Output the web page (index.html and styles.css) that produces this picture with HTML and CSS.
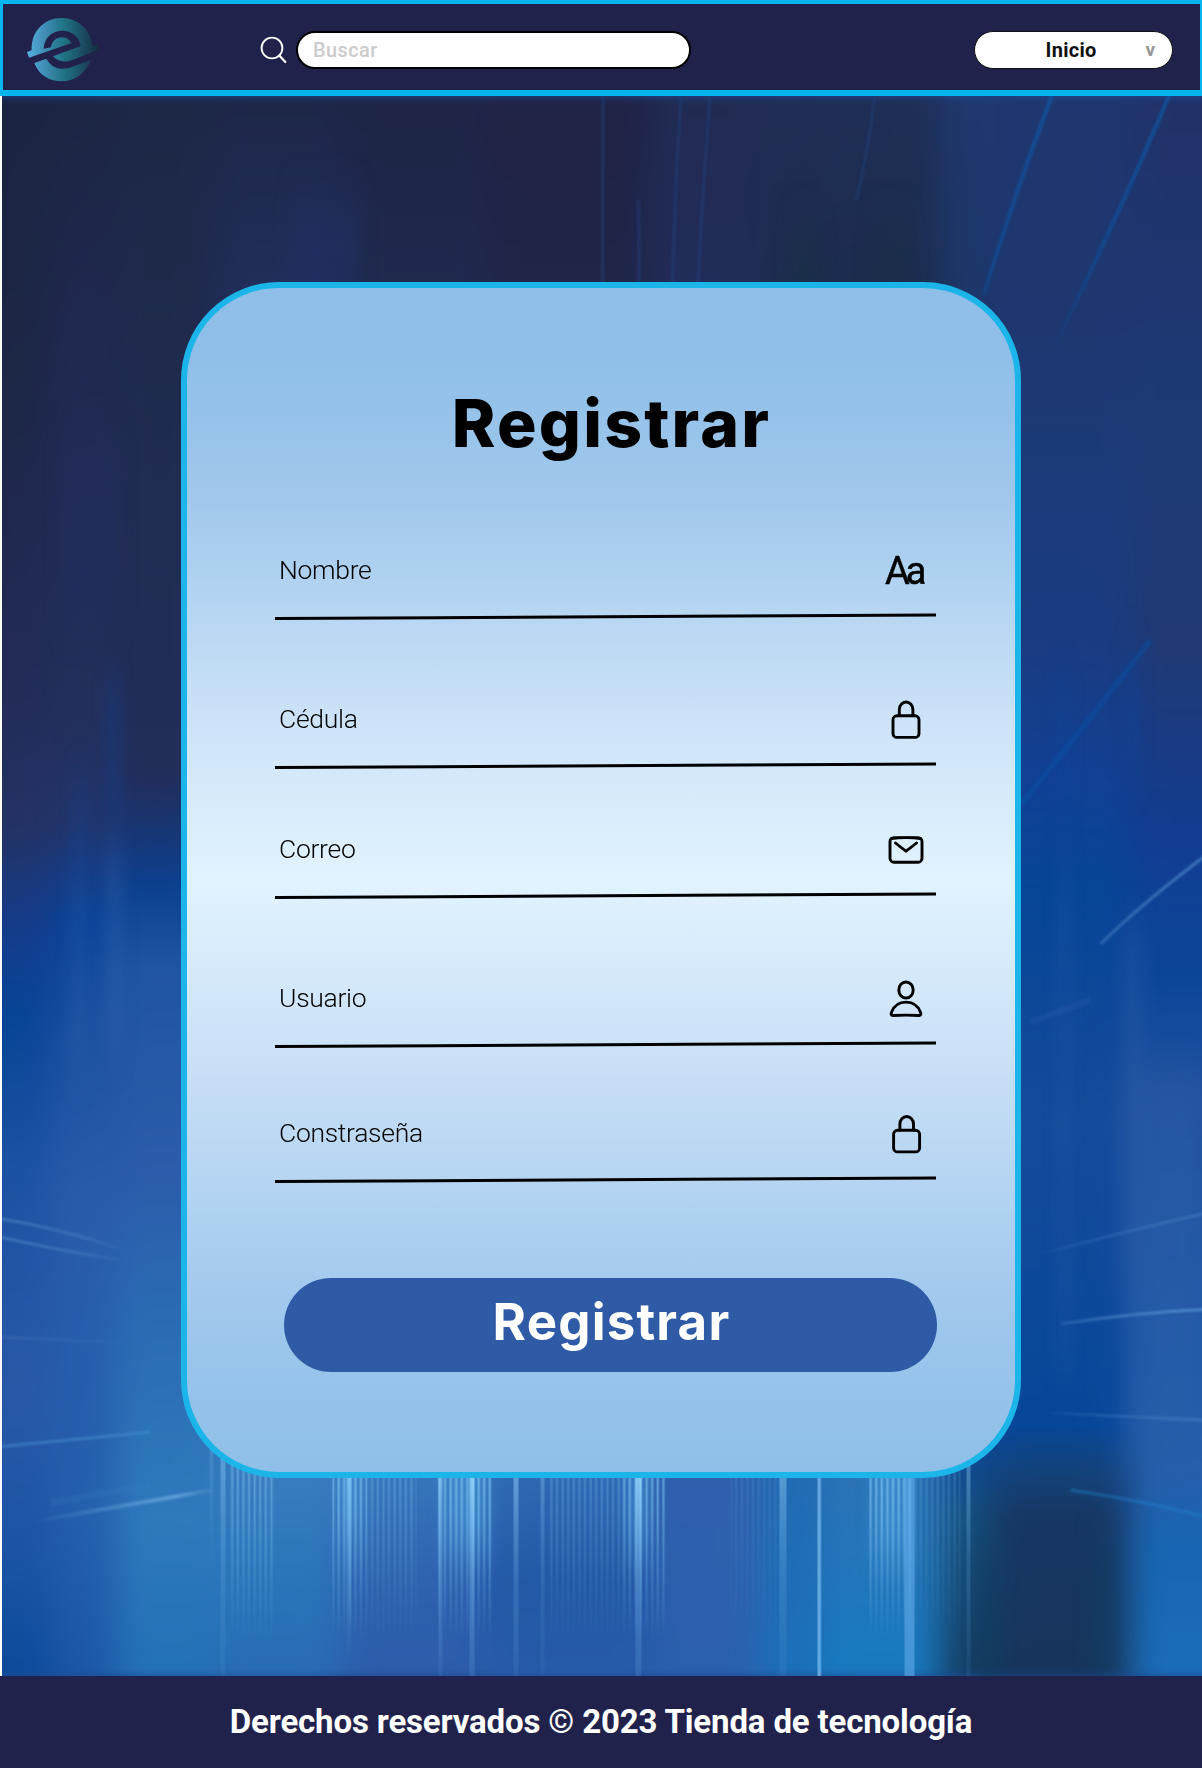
FILE: index.html
```html
<!DOCTYPE html>
<html lang="es">
<head>
<meta charset="utf-8">
<title>Registrar</title>
<link rel="stylesheet" href="styles.css">
</head>
<body>
<header class="topbar">
  <svg class="logo" width="76" height="68" viewBox="0 0 228 204">
    <defs><linearGradient id="lg" gradientUnits="userSpaceOnUse" x1="6" y1="0" x2="220" y2="0"><stop offset="0" stop-color="#58b0e2"/><stop offset=".25" stop-color="#3f8db5"/><stop offset=".5" stop-color="#217587"/><stop offset=".8" stop-color="#1b4a60"/><stop offset="1" stop-color="#142c40"/></linearGradient></defs>
    <path fill="url(#lg)" fill-rule="evenodd" d="M6 108L20 103C18 45 58 6 110 6C162 6 198 44 202 88L218 86L220 101L144 131C120 140 98 138 84 121L167 90C164 62 140 44 112 44C82 44 58 64 56 98L78 94C80 76 94 64 111 64C124 64 134 70 140 81L12 125ZM28 141L64 128C78 152 100 164 132 156L198 132C184 170 150 196 110 196C70 196 40 174 28 141Z"/>
  </svg>
  <div class="search">
    <svg class="search-icon" width="28" height="28" viewBox="0 0 28 28" fill="none" stroke="#fff" stroke-linecap="round"><circle cx="12" cy="12" r="10.4" stroke-width="1.9"/><path d="M19.3 19.5L25.3 26" stroke-width="2.2"/></svg>
    <div class="search-field">Buscar</div>
  </div>
  <div class="select"><span>Inicio</span><span class="caret">v</span></div>
</header>
<main class="stage">
  <svg class="backdrop" width="1200.5" height="1580" viewBox="1.5 96 1200.5 1580" preserveAspectRatio="none">
    <defs>
      <linearGradient id="c0" x2="0" y2="1"><stop offset="0" stop-color="#1b2440"/><stop offset=".2" stop-color="#1d2747"/><stop offset=".38" stop-color="#232b59"/><stop offset=".46" stop-color="#243263"/><stop offset=".53" stop-color="#143c8c"/><stop offset=".58" stop-color="#074495"/><stop offset=".68" stop-color="#1c52a2"/><stop offset=".82" stop-color="#2a58a8"/><stop offset=".92" stop-color="#1b54a4"/><stop offset="1" stop-color="#0c4a9a"/></linearGradient>
      <linearGradient id="c1" x2="0" y2="1"><stop offset="0" stop-color="#1c2542"/><stop offset=".2" stop-color="#212a52"/><stop offset=".4" stop-color="#22305c"/><stop offset=".46" stop-color="#22356c"/><stop offset=".52" stop-color="#0a4297"/><stop offset=".59" stop-color="#1c50a0"/><stop offset=".7" stop-color="#2b5cab"/><stop offset=".8" stop-color="#265eac"/><stop offset=".9" stop-color="#235fac"/><stop offset="1" stop-color="#1b56a5"/></linearGradient>
      <linearGradient id="c2" x2="0" y2="1"><stop offset="0" stop-color="#1d2746"/><stop offset=".25" stop-color="#202c50"/><stop offset=".43" stop-color="#222d5a"/><stop offset=".5" stop-color="#0c408f"/><stop offset=".55" stop-color="#2055a3"/><stop offset=".68" stop-color="#2c5cab"/><stop offset=".78" stop-color="#2a6db5"/><stop offset=".9" stop-color="#2f79bd"/><stop offset="1" stop-color="#2371b7"/></linearGradient>
      <linearGradient id="c3" x2="0" y2="1"><stop offset="0" stop-color="#1e2747"/><stop offset=".12" stop-color="#222e5b"/><stop offset=".5" stop-color="#1a4a99"/><stop offset=".87" stop-color="#397dc0"/><stop offset=".95" stop-color="#2873b9"/><stop offset="1" stop-color="#2a6cb6"/></linearGradient>
      <linearGradient id="c4" x2="0" y2="1"><stop offset="0" stop-color="#1e2546"/><stop offset=".12" stop-color="#1f294d"/><stop offset=".5" stop-color="#1a4a99"/><stop offset=".87" stop-color="#3676bd"/><stop offset=".95" stop-color="#2e60ae"/><stop offset="1" stop-color="#2d5cab"/></linearGradient>
      <linearGradient id="c5" x2="0" y2="1"><stop offset="0" stop-color="#1f2345"/><stop offset=".12" stop-color="#1f2648"/><stop offset=".5" stop-color="#1a4a99"/><stop offset=".87" stop-color="#2f6ab5"/><stop offset=".94" stop-color="#2359a6"/><stop offset="1" stop-color="#275baa"/></linearGradient>
      <linearGradient id="c6" x2="0" y2="1"><stop offset="0" stop-color="#212b52"/><stop offset=".12" stop-color="#212b59"/><stop offset=".5" stop-color="#1a4a99"/><stop offset=".87" stop-color="#305fae"/><stop offset="1" stop-color="#2b60ae"/></linearGradient>
      <linearGradient id="c7" x2="0" y2="1"><stop offset="0" stop-color="#222c54"/><stop offset=".12" stop-color="#1c2d4d"/><stop offset=".5" stop-color="#1a4a99"/><stop offset=".87" stop-color="#216bb3"/><stop offset="1" stop-color="#1b70b8"/></linearGradient>
      <linearGradient id="c8" x2="0" y2="1"><stop offset="0" stop-color="#1f2e55"/><stop offset=".12" stop-color="#1c2c4d"/><stop offset=".5" stop-color="#1a4a99"/><stop offset=".87" stop-color="#2d72b7"/><stop offset="1" stop-color="#177ac0"/></linearGradient>
      <linearGradient id="c9" x2="0" y2="1"><stop offset="0" stop-color="#1f396f"/><stop offset=".13" stop-color="#1c3869"/><stop offset=".5" stop-color="#0c4597"/><stop offset=".85" stop-color="#0b4799"/><stop offset=".9" stop-color="#14517f"/><stop offset="1" stop-color="#143c60"/></linearGradient>
      <linearGradient id="c10" x2="0" y2="1"><stop offset="0" stop-color="#1f376f"/><stop offset=".12" stop-color="#1f376f"/><stop offset=".35" stop-color="#193c82"/><stop offset=".43" stop-color="#124094"/><stop offset=".5" stop-color="#064596"/><stop offset=".65" stop-color="#154b9b"/><stop offset=".84" stop-color="#064799"/><stop offset=".87" stop-color="#13427b"/><stop offset=".9" stop-color="#173763"/><stop offset="1" stop-color="#17345b"/></linearGradient>
      <linearGradient id="c11" x2="0" y2="1"><stop offset="0" stop-color="#213268"/><stop offset=".2" stop-color="#1d3a76"/><stop offset=".35" stop-color="#203974"/><stop offset=".47" stop-color="#123d92"/><stop offset=".56" stop-color="#0b4698"/><stop offset=".63" stop-color="#2352a1"/><stop offset=".8" stop-color="#235ba9"/><stop offset=".87" stop-color="#275fad"/><stop offset=".92" stop-color="#1866b3"/><stop offset="1" stop-color="#1b6dba"/></linearGradient>
      <filter id="soft" x="-10%" width="120%" y="-2%" height="104%" color-interpolation-filters="sRGB"><feGaussianBlur stdDeviation="18 5"/></filter>
      <filter id="haze" x="-50%" width="200%" y="-50%" height="200%" color-interpolation-filters="sRGB"><feGaussianBlur stdDeviation="8 22"/></filter>
      <filter id="thin" filterUnits="userSpaceOnUse" x="0" y="60" width="1230" height="1640" color-interpolation-filters="sRGB"><feGaussianBlur stdDeviation="1.2"/></filter>
      <linearGradient id="rayIn" gradientUnits="userSpaceOnUse" x1="1030" y1="0" x2="1180" y2="0"><stop offset="0" stop-color="#5c94d4" stop-opacity="0"/><stop offset=".5" stop-color="#4d84c8"/><stop offset="1" stop-color="#5f9cda"/></linearGradient>
      <linearGradient id="rayOut" gradientUnits="userSpaceOnUse" x1="0" y1="0" x2="135" y2="0"><stop offset="0" stop-color="#5990d0"/><stop offset=".6" stop-color="#4a80c4"/><stop offset="1" stop-color="#4a80c4" stop-opacity="0"/></linearGradient>
      <linearGradient id="rayLow" gradientUnits="userSpaceOnUse" x1="30" y1="0" x2="212" y2="0"><stop offset="0" stop-color="#6aa8de" stop-opacity="0"/><stop offset=".8" stop-color="#70acdf"/><stop offset="1" stop-color="#6aa8de" stop-opacity=".2"/></linearGradient>
      <linearGradient id="down" gradientUnits="userSpaceOnUse" x1="0" y1="96" x2="0" y2="360"><stop offset="0" stop-color="#1255a0"/><stop offset=".6" stop-color="#104a93"/><stop offset="1" stop-color="#104a93" stop-opacity="0"/></linearGradient>
      <linearGradient id="fade" x2="0" y2="1"><stop offset="0" stop-color="#84cdf8" stop-opacity=".75"/><stop offset=".4" stop-color="#76bdf0" stop-opacity=".4"/><stop offset="1" stop-color="#6eaee8" stop-opacity="0"/></linearGradient>
      <linearGradient id="long" x2="0" y2="1"><stop offset="0" stop-color="#9ddcff" stop-opacity=".8"/><stop offset=".5" stop-color="#7bbcf0" stop-opacity=".4"/><stop offset="1" stop-color="#6aa6e4" stop-opacity=".2"/></linearGradient>
      <linearGradient id="combfade" x2="0" y2="1"><stop offset="0" stop-color="#ddd"/><stop offset=".35" stop-color="#999"/><stop offset=".85" stop-color="#000"/></linearGradient>
      <mask id="combmask" maskUnits="userSpaceOnUse" x="200" y="1430" width="760" height="246"><rect x="200" y="1430" width="760" height="246" fill="url(#combfade)"/></mask>
      <pattern id="comb" patternUnits="userSpaceOnUse" width="5.6" height="20"><rect x="1" width="2.2" height="20" fill="#7cc3f2"/></pattern>
      <filter id="edge" filterUnits="userSpaceOnUse" x="190" y="1400" width="800" height="320" color-interpolation-filters="sRGB"><feGaussianBlur stdDeviation=".7 0"/></filter>
    </defs>
    <rect x="0" y="90" width="1204" height="1590" fill="#1d4a95"/>
    <g filter="url(#soft)">
      <rect x="-60" y="96" width="110" height="1580" fill="url(#c0)"/>
      <rect x="50" y="96" width="65" height="1580" fill="url(#c1)"/>
      <rect x="115" y="96" width="105" height="1580" fill="url(#c2)"/>
      <rect x="220" y="96" width="120" height="1580" fill="url(#c3)"/>
      <rect x="340" y="96" width="140" height="1580" fill="url(#c4)"/>
      <rect x="480" y="96" width="170" height="1580" fill="url(#c5)"/>
      <rect x="650" y="96" width="110" height="1580" fill="url(#c6)"/>
      <rect x="760" y="96" width="60" height="1580" fill="url(#c7)"/>
      <rect x="820" y="96" width="120" height="1580" fill="url(#c8)"/>
      <rect x="940" y="96" width="50" height="1580" fill="url(#c9)"/>
      <rect x="990" y="96" width="138" height="1580" fill="url(#c10)"/>
      <rect x="1128" y="96" width="140" height="1580" fill="url(#c11)"/>
    </g>
    <g filter="url(#haze)">
      <rect x="72" y="870" width="12" height="200" fill="#3467b0" opacity=".3"/>
      <rect x="106" y="850" width="14" height="200" fill="#3b6cb5" opacity=".35"/>
      <rect x="109" y="680" width="7" height="140" fill="#0b4ba4" opacity=".6"/>
      <rect x="76" y="780" width="8" height="90" fill="#0b4ba4" opacity=".4"/>
      <rect x="1058" y="680" width="8" height="130" fill="#0c4aa4" opacity=".5"/>
      <rect x="1128" y="650" width="8" height="130" fill="#0c4aa4" opacity=".5"/>
      <rect x="1122" y="930" width="20" height="360" fill="#2858a4" opacity=".5"/>
      <rect x="1060" y="860" width="8" height="520" fill="#2458a6" opacity=".45"/>
      <rect x="1126" y="1080" width="70" height="380" fill="#2a5faa" opacity=".35"/>
      <rect x="980" y="1560" width="20" height="140" fill="#103e5f" opacity=".6"/>
      <rect x="1090" y="1540" width="25" height="140" fill="#103e60" opacity=".6"/>
      <rect x="790" y="230" width="30" height="80" fill="#1a2f46" opacity=".5"/>
      <rect x="870" y="230" width="40" height="60" fill="#1a3048" opacity=".5"/>
      <rect x="290" y="200" width="70" height="100" fill="#222e62" opacity=".6"/>
      <rect x="60" y="440" width="60" height="180" fill="#232c60" opacity=".5"/>
    </g>
    <g filter="url(#thin)" fill="none" stroke-width="3">
      <path d="M1053 92Q1015 190 983 296M1170 92Q1125 200 1055 345" stroke="url(#down)" stroke-width="4" opacity=".85"/>
      <path d="M875 90Q868 150 856 200M710 90Q702 190 697 290M681 90Q674 190 672 290M602.5 90L602 290M638 200L638.5 290" stroke="#21427c" stroke-width="2.5" opacity=".65"/>
      <path d="M1020 805Q1085 725 1150 640" stroke="#0755a7" stroke-width="6" opacity=".45"/>
      <path d="M1100 944Q1145 900 1210 852" stroke="url(#rayIn)" opacity=".55"/>
      <path d="M1030 1022L1090 1000" stroke="#2d5fad" opacity=".3" stroke-width="7"/>
      <g stroke="url(#rayIn)" opacity=".65"><path d="M1040 1254Q1130 1230 1210 1212" opacity=".5"/><path d="M1060 1324Q1130 1313 1210 1309"/><path d="M1050 1413L1210 1420.500" opacity=".5"/><path d="M1070 1490Q1140 1500 1210 1518" stroke="#1f86ce" opacity=".7"/></g>
      <g stroke="url(#rayOut)" opacity=".5"><path d="M-5 1218Q60 1228 130 1252M-5 1236Q55 1250 120 1260"/><path d="M-5 1337L135 1343" opacity=".5"/><path d="M-5 1447Q70 1440 150 1432" stroke="#4b95d4"/></g>
      <path d="M30 1522Q120 1506 212 1490" stroke="url(#rayLow)" stroke-width="4" opacity=".7"/>
      <path d="M50 1503L150 1485" stroke="#3e82c6" stroke-width="7" opacity=".2"/>
    </g>
    <g filter="url(#haze)" opacity=".5"><rect x="338" y="1440" width="24" height="100" fill="#4b9ddb"/><rect x="444" y="1440" width="44" height="110" fill="#4b9ddb"/><rect x="628" y="1440" width="20" height="110" fill="#4b9ddb"/><rect x="872" y="1440" width="38" height="120" fill="#4b9ddb"/></g>
    <g filter="url(#edge)">
    <g mask="url(#combmask)">
      <rect x="228" y="1430" width="45" height="246" fill="url(#comb)" opacity=".7"/>
      <rect x="332" y="1430" width="34" height="246" fill="url(#comb)"/>
      <rect x="366" y="1430" width="50" height="246" fill="url(#comb)" opacity=".5"/>
      <rect x="436" y="1430" width="55" height="246" fill="url(#comb)"/>
      <rect x="548" y="1430" width="74" height="246" fill="url(#comb)" opacity=".45"/>
      <rect x="622" y="1430" width="44" height="246" fill="url(#comb)" opacity=".9"/>
      <rect x="730" y="1430" width="50" height="246" fill="url(#comb)" opacity=".2"/>
      <rect x="866" y="1430" width="46" height="246" fill="url(#comb)"/>
      <rect x="912" y="1430" width="50" height="246" fill="url(#comb)" opacity=".3"/>
    </g>
      <rect x="209" y="1440" width="4" height="140" fill="url(#fade)" opacity=".3"/>
      <rect x="220" y="1450" width="5" height="226" fill="url(#long)" opacity=".5"/>
      <rect x="346" y="1470" width="5" height="190" fill="url(#fade)"/>
      <rect x="438" y="1470" width="4" height="206" fill="url(#long)" opacity=".7"/>
      <rect x="469" y="1470" width="5" height="206" fill="url(#long)"/>
      <rect x="513" y="1470" width="5" height="206" fill="url(#long)" opacity=".6"/>
      <rect x="540" y="1470" width="4" height="206" fill="url(#long)" opacity=".4"/>
      <rect x="635" y="1470" width="6" height="206" fill="url(#long)"/>
      <rect x="779" y="1470" width="7" height="206" fill="url(#long)" opacity=".55"/>
      <rect x="817" y="1470" width="3.5" height="206" fill="#7cbcf0" opacity=".75"/>
      <rect x="904" y="1470" width="10" height="206" fill="#62acec" opacity=".6"/>
      <rect x="966" y="1450" width="4" height="226" fill="url(#long)" opacity=".5"/>
    </g>
  </svg>
  <form class="card">
    <h1 class="card-title">Registrar</h1>
    <div class="field">
      <label>Nombre</label><span class="aa">Aa</span>
      <svg class="rule" viewBox="0 0 661 7"><path d="M0 4.500L661 1.100"/></svg>
    </div>
    <div class="field wide-gap">
      <label>Cédula</label>
      <svg class="icon" viewBox="0 0 40 40"><rect x="7" y="15.8" width="26" height="21.6" rx="4"/><path d="M13.3 15.8V9.4a6.8 7.4 0 0 1 13.6 0v6.4"/></svg>
      <svg class="rule" viewBox="0 0 661 7"><path d="M0 4.500L661 1.100"/></svg>
    </div>
    <div class="field">
      <label>Correo</label>
      <svg class="icon" viewBox="0 0 40 40"><rect x="4" y="7.6" width="32" height="24.6" rx="4"/><path d="M5 8.7Q20 7 35 8.7" stroke-width="2.5"/><path d="M9.500 13Q15 17.500 20 21.200Q25 17.500 30.500 13"/></svg>
      <svg class="rule" viewBox="0 0 661 7"><path d="M0 4.500L661 1.100"/></svg>
    </div>
    <div class="field wide-gap">
      <label>Usuario</label>
      <svg class="icon" viewBox="0 0 40 40"><ellipse cx="20" cy="11" rx="7.2" ry="8"/><path d="M6.800 36.500C4.600 36.500 5 34.500 5.600 33.100C8 26.500 13 23.100 20 23.100S32 26.500 34.400 33.100C35 34.500 35.400 36.500 33.200 36.500Q20 35.700 6.800 36.500Z"/></svg>
      <svg class="rule" viewBox="0 0 661 7"><path d="M0 4.500L661 1.100"/></svg>
    </div>
    <div class="field last">
      <label>Constraseña</label>
      <svg class="icon" viewBox="0 0 40 40"><rect x="7.6" y="16.3" width="26" height="21.6" rx="4"/><path d="M13.9 16.3V9.9a6.8 7.4 0 0 1 13.6 0v6.4"/></svg>
      <svg class="rule" viewBox="0 0 661 7"><path d="M0 4.500L661 1.100"/></svg>
    </div>
    <button class="submit" type="button">Registrar</button>
  </form>
</main>
<footer class="footer"><span>Derechos reservados © 2023 Tienda de tecnología</span></footer>
</body>
</html>
```

FILE: styles.css
```css
* { box-sizing: border-box; }
body { margin: 0; width: 1202px; font-family: Roboto, "Liberation Sans", sans-serif; background: #fff; }
svg { display: block; }

.topbar {
  display: flex; align-items: center; height: 96px; padding: 0 27.5px 0 22px;
  background: #21224b; border: solid #08b5ee; border-width: 4px 2px 6px 3px;
}
.logo { margin-top: 6px; }
.search { display: flex; align-items: center; margin: 5px 0 0 159px; }
.search-field {
  width: 395px; height: 38px; margin-left: 8px; padding-left: 15px;
  background: #fff; border: 2px solid #000; border-radius: 19px;
  font-size: 20px; font-weight: 500; line-height: 34px; letter-spacing: .4px; color: #ccc;
}
.select {
  display: flex; align-items: center; justify-content: space-between;
  width: 199px; height: 38px; margin: 5px 0 0 auto; padding: 0 16px 0 71px;
  background: #fff; border: 1px solid #111; border-radius: 19px;
  font-size: 20px; font-weight: 700; line-height: 36px; letter-spacing: .3px; color: #111;
}
.caret { font-size: 19px; color: #999; }

.stage { position: relative; height: 1580px; padding: 186px 181px 0; }
.backdrop { position: absolute; left: 1.5px; top: 0; }
.card {
  position: relative; display: flex; flex-direction: column;
  width: 840px; height: 1196px; padding: 95px 78px 0 88px;
  border: 6px solid #1cb5ea; border-radius: 98px;
  background: linear-gradient(#8fbfe8 0, #8fbfe8 6%, #a1c8ec 18%, #b3d4f1 26%, #c6dff6 34%, #cfe4f9 37.5%, #e1f3fe 50%, #cfe4f9 62%, #c6def5 67%, #b5d5f2 75.5%, #a4caee 84%, #96c3ea 93%, #8fbfe8 100%);
}
.card-title {
  margin: 0 -11px 0 0; height: 80px; text-align: center; color: #000;
  font: 800 66px/80px Inter, Roboto, sans-serif; letter-spacing: 2.2px;
}
.field {
  display: flex; flex-wrap: wrap; justify-content: space-between; align-content: flex-start;
  width: 661px; height: 70px; margin-bottom: 78.5px; color: #000;
}
.card-title + .field { margin-top: 88px; }
.field.wide-gap { margin-bottom: 60.5px; }
.field.wide-gap:nth-of-type(4) { margin-bottom: 65.5px; }
.field.last { margin-bottom: 93.5px; }
.field label { height: 40px; padding-left: 4px; font-size: 26.5px; font-weight: 300; line-height: 38px; letter-spacing: -.3px; }
.icon { width: 40px; height: 40px; margin-right: 10.5px; fill: none; stroke: #000; stroke-width: 2.9; stroke-linejoin: round; stroke-linecap: round; }
.aa { width: 40px; height: 40px; margin-right: 11px; font-size: 38px; font-weight: 400; line-height: 41px; letter-spacing: -4px; white-space: nowrap; -webkit-text-stroke: .5px #000; }
.rule { flex: none; width: 661px; height: 7px; margin-top: 23px; stroke: #000; stroke-width: 3; overflow: visible; }
.submit {
  width: 653px; height: 94.5px; margin-left: 9px; padding: 0 0 6px 2px;
  border: 0; border-radius: 47px; background: #2e5aa6; color: #fff;
  font: 700 51px/85px Inter, Roboto, sans-serif; letter-spacing: 1.2px;
}
.footer { display: flex; justify-content: center; height: 92px; background: #21224b; }
.footer span { font-size: 33px; font-weight: 700; line-height: 92px; letter-spacing: -.15px; color: #fff; white-space: nowrap; }
```
